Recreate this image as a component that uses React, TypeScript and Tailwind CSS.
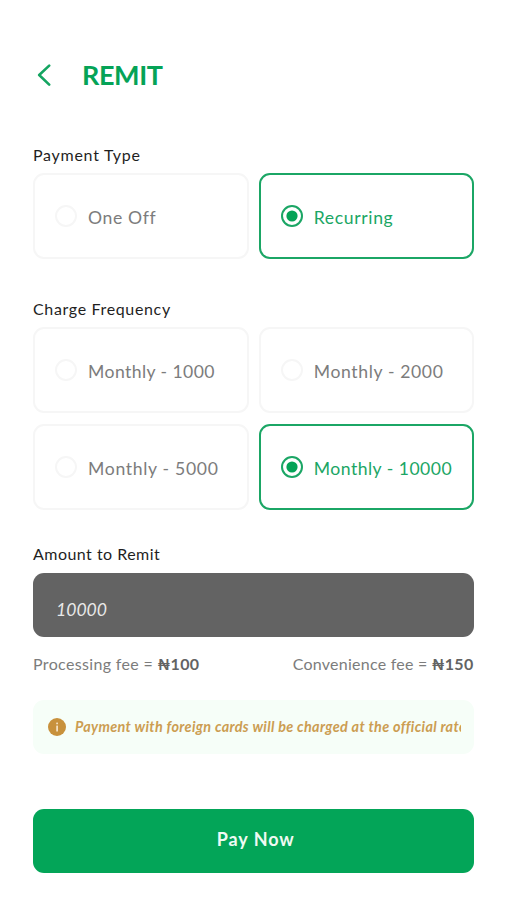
import React, { useState } from 'react';
import clsx from 'clsx';

const paymentTypes = [
  { label: 'One Off', tracking: 'tracking-[0.63px]' },
  { label: 'Recurring', tracking: 'tracking-[0.64px]' },
];

const frequencies = [
  { label: 'Monthly - 1000', tracking: 'tracking-[0.42px]' },
  { label: 'Monthly - 2000', tracking: 'tracking-[0.63px]' },
  { label: 'Monthly - 5000', tracking: 'tracking-[0.68px]' },
  { label: 'Monthly - 10000', tracking: 'tracking-[0.48px]' },
];

type OptionProps = {
  label: string;
  tracking: string;
  selected: boolean;
  onSelect: () => void;
};

function Option({ label, tracking, selected, onSelect }: OptionProps) {
  return (
    <button
      type="button"
      role="radio"
      aria-checked={selected}
      onClick={onSelect}
      className={clsx(
        'flex h-[86px] items-center rounded-[11px] border-2 pl-[20px] text-left',
        selected ? 'border-[#1ba665] text-[#1ba665]' : 'border-[#f6f6f6] text-[#7c7c7c]'
      )}
    >
      <svg className="shrink-0" width="22" height="22" viewBox="0 0 22 22">
        <circle cx="11" cy="11" r="10" fill="none" stroke={selected ? '#1ba665' : '#f6f6f6'} strokeWidth="2" />
        {selected && <circle cx="11" cy="11" r="5.6" fill="#05a357" />}
      </svg>
      <span className={clsx('ml-[11px] whitespace-nowrap pt-[4px] text-[17.6px] leading-6', tracking)}>{label}</span>
    </button>
  );
}

export default function App() {
  const [type, setType] = useState('Recurring');
  const [frequency, setFrequency] = useState('Monthly - 10000');
  const [amount, setAmount] = useState('10000');

  return (
    <div className="flex min-h-[900px] w-[507px] flex-col bg-white pl-[33px] pr-[32.6px] pt-[60px] font-['Lato','Open_Sans',sans-serif]">
      {/* Header */}
      <header className="flex h-[30px] items-center">
        <button type="button" aria-label="Back" className="ml-[4px]">
          <svg width="14" height="24" viewBox="0 0 14 24" fill="none" stroke="#14a561" strokeWidth="2.6" strokeLinecap="round" strokeLinejoin="round">
            <path d="M12.2 2.6 2.2 12l10 9.6" />
          </svg>
        </button>
        <h1 className="ml-[31px] text-[27px] font-bold leading-[30px] tracking-[-0.4px] text-[#05a357]">REMIT</h1>
      </header>

      {/* Payment type */}
      <h2 className="mt-[53px] text-[16px] leading-6 tracking-[0.73px] text-[#1f1f1f]">Payment Type</h2>
      <div role="radiogroup" className="mt-[6px] grid grid-cols-2 gap-x-[10px]">
        {paymentTypes.map((p) => (
          <Option key={p.label} {...p} selected={type === p.label} onSelect={() => setType(p.label)} />
        ))}
      </div>

      {/* Charge frequency */}
      <h2 className="mt-[38px] text-[16px] leading-6 tracking-[0.65px] text-[#1f1f1f]">Charge Frequency</h2>
      <div role="radiogroup" className="mt-[6px] grid grid-cols-2 gap-x-[10px] gap-y-[11px]">
        {frequencies.map((f) => (
          <Option key={f.label} {...f} selected={frequency === f.label} onSelect={() => setFrequency(f.label)} />
        ))}
      </div>

      {/* Amount */}
      <h2 className="mt-[32px] text-[16px] leading-6 tracking-[0.47px] text-[#1f1f1f]">Amount to Remit</h2>
      <input
        value={amount}
        onChange={(e) => setAmount(e.target.value)}
        className="mt-[7px] h-[64px] w-full rounded-[11px] bg-[#636363] px-[23px] pt-[9px] text-[17.6px] italic text-[#e9e9e9] outline-none"
      />
      <div className="mt-[15px] flex justify-between pr-px text-[16px] leading-6 text-[#7c7c7c]">
        <p className="tracking-[0.34px]">
          Processing fee = <b className="font-bold text-[#636363]">₦100</b>
        </p>
        <p className="tracking-[0.24px]">
          Convenience fee = <b className="font-bold text-[#636363]">₦150</b>
        </p>
      </div>

      {/* Notice */}
      <div className="mt-[24px] flex h-[54px] items-center rounded-[11px] bg-[#f6fef8] pl-[15px] pr-[13px]">
        <svg className="shrink-0" width="18" height="18" viewBox="0 0 18 18">
          <circle cx="9" cy="9" r="9" fill="#c8913c" />
          <rect x="8.2" y="4.4" width="1.8" height="1.9" rx="0.5" fill="#f3dfc0" />
          <rect x="8.2" y="7.4" width="1.8" height="6" rx="0.5" fill="#f3dfc0" />
        </svg>
        <p className="ml-[9px] flex-1 overflow-hidden whitespace-nowrap text-[14.4px] font-bold italic leading-6 tracking-[0.33px] text-[#cc9d52]">
          Payment with foreign cards will be charged at the official rate
        </p>
      </div>

      <button type="button" className="mt-[55px] h-[64px] w-full rounded-[11px] bg-[#03a558] pb-[3px] pl-[4px] text-[18px] font-bold tracking-[0.95px] text-[#effaf3]">
        Pay Now
      </button>
    </div>
  );
}
